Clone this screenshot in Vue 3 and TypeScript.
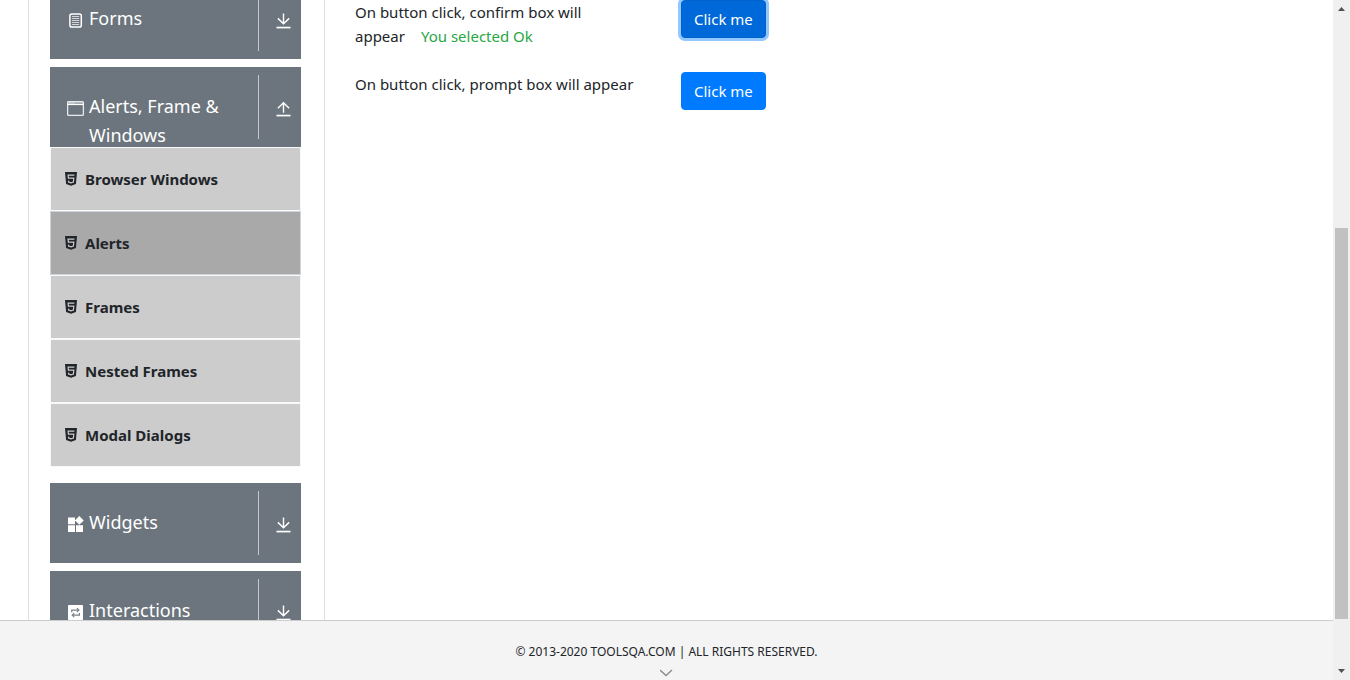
<script setup lang="ts">
import { ref } from 'vue'

type IconName = 'forms' | 'window' | 'widgets' | 'interactions'

interface Group {
  name: string
  icon: IconName
  open: boolean
  items: string[]
}

const groups = ref<Group[]>([
  { name: 'Forms', icon: 'forms', open: false, items: [] },
  {
    name: 'Alerts, Frame & Windows',
    icon: 'window',
    open: true,
    items: ['Browser Windows', 'Alerts', 'Frames', 'Nested Frames', 'Modal Dialogs'],
  },
  { name: 'Widgets', icon: 'widgets', open: false, items: [] },
  { name: 'Interactions', icon: 'interactions', open: false, items: [] },
])

const activeItem = ref('Alerts')
const focused = ref('confirm')
</script>

<template>
  <div class="app">
    <div class="page">
      <div class="viewport">
        <nav class="sidebar">
          <div class="groups">
            <section v-for="group in groups" :key="group.name" class="group">
              <button type="button" class="group-header" :aria-expanded="group.open">
                <svg v-if="group.icon === 'forms'" class="group-icon" viewBox="0 0 18 18" aria-hidden="true">
                  <rect x="2.9" y="1.9" width="11.4" height="13.2" rx="1.8" fill="none" stroke="currentColor" stroke-width="1.5" />
                  <path d="M5 4.5h7.2M5 6.5h7.2M5 8.5h7.2M5 10.5h7.2M5 12.5h7.2" stroke="currentColor" stroke-width="1" opacity="0.7" />
                </svg>
                <svg v-else-if="group.icon === 'window'" class="group-icon" viewBox="0 0 18 18" aria-hidden="true">
                  <rect x="0.6" y="1.6" width="15.8" height="13.8" rx="1" fill="none" stroke="currentColor" stroke-width="1.3" opacity="0.85" />
                  <path d="M0.6 4.5h15.8" stroke="currentColor" stroke-width="1.2" />
                  <path d="M1 3h15" stroke="currentColor" stroke-width="1.6" opacity="0.45" />
                  <path d="M2.5 3h1M4.5 3h1M6.5 3h1" stroke="currentColor" stroke-width="1.2" />
                </svg>
                <svg v-else-if="group.icon === 'widgets'" class="group-icon" viewBox="0 0 18 18" aria-hidden="true">
                  <path d="M1 1.5h7v6.8H1zM1 9.3h7V16H1zM9 9.3h7V16H9zM12.3 0l4.5 4.4-4.5 4.3-4.4-4.3z" fill="currentColor" />
                </svg>
                <svg v-else class="group-icon" viewBox="0 0 18 18" aria-hidden="true">
                  <rect x="1" y="1" width="15" height="15" rx="0.8" fill="currentColor" />
                  <g fill="none" stroke="#6c757d" stroke-width="1.2" opacity="0.9">
                    <path d="M4.7 8.3V6.1h6.4M12.4 8.9v2.2H6" />
                    <path d="M9.9 4.2l2 1.9-2 1.9M7.2 9.2l-2 1.9 2 1.9" />
                  </g>
                </svg>
                <span class="group-name">{{ group.name }}</span>
                <span class="group-toggle">
                  <svg viewBox="0 0 16 16" aria-hidden="true">
                    <g fill="none" stroke="currentColor" stroke-width="1.5">
                      <path v-if="group.open" d="M8 12V1.4M2 7.2l6-5.8 6 5.8" />
                      <path v-else d="M8 0v10.8M2 5.2l6 5.8 6-5.8" />
                      <path d="M0.5 15h15" stroke-width="1.8" />
                    </g>
                  </svg>
                </span>
              </button>
              <ul v-if="group.open" class="menu">
                <li v-for="item in group.items" :key="item">
                  <a href="#" class="menu-item" :class="{ active: item === activeItem }" @click.prevent="activeItem = item">
                    <svg viewBox="0 0 12 14" aria-hidden="true">
                      <path d="M0 0h12l-1.1 12L6 13.7 1.1 12z" fill="currentColor" />
                      <path d="M9.4 3.1H3.1l.3 3.1h5.4l-.4 3.9L6 10.9l-2.4-.8-.1-1.5" fill="none" stroke="#cccccc" stroke-width="1.2" />
                    </svg>
                    <span>{{ item }}</span>
                  </a>
                </li>
              </ul>
            </section>
          </div>
        </nav>
        <main class="content">
          <div class="row">
            <p class="label">
              On button click, confirm box will
              <span class="result-line">appear<span class="result">You selected Ok</span></span>
            </p>
            <button type="button" class="btn" :class="{ focused: focused === 'confirm' }" @click="focused = 'confirm'">Click me</button>
          </div>
          <div class="row">
            <p class="label">On button click, prompt box will appear</p>
            <button type="button" class="btn" :class="{ focused: focused === 'prompt' }" @click="focused = 'prompt'">Click me</button>
          </div>
        </main>
      </div>
      <footer class="footer">
        <span>© 2013-2020 TOOLSQA.COM | ALL RIGHTS RESERVED.</span>
        <svg viewBox="0 0 14 8" aria-hidden="true">
          <path d="M0 1l6 5.5L12 1" fill="none" stroke="#8a8a8a" stroke-width="1.3" />
        </svg>
      </footer>
    </div>
    <div class="scrollbar" aria-hidden="true">
      <svg viewBox="0 0 7 4"><path d="M0 4L3.5 0 7 4z" fill="#505050" /></svg>
      <div class="track"><div class="thumb"></div></div>
      <svg viewBox="0 0 7 4"><path d="M0 0L3.5 4 7 0z" fill="#505050" /></svg>
    </div>
  </div>
</template>

<style>
body {
  margin: 0;
}
</style>

<style scoped>
.app {
  display: flex;
  height: 100vh;
  overflow: hidden;
  background: #fff;
  color: #212529;
  font: 15px/24px "Segoe UI", "Noto Sans", "Open Sans", sans-serif;
}
.page {
  flex: 1;
  min-width: 0;
  display: flex;
  flex-direction: column;
}
.viewport {
  flex: 1;
  min-height: 0;
  display: flex;
  overflow: hidden;
  padding-left: 28px;
}
.sidebar {
  box-sizing: border-box;
  flex: 0 0 297px;
  padding: 0 23px 0 21px;
  border: solid #dee2e6;
  border-width: 0 1px;
}
.groups {
  display: flex;
  flex-direction: column;
  gap: 8px;
  margin-top: -21px;
}
.group-header {
  box-sizing: border-box;
  display: flex;
  width: 100%;
  height: 80px;
  padding: 8px 0 8px 17px;
  border: 0;
  background: #6c757d;
  color: #fff;
  font: inherit;
  font-size: 18px;
  line-height: 29px;
  text-align: left;
  cursor: pointer;
}
.group-icon {
  flex: none;
  width: 18px;
  height: 18px;
  margin: 25px 4px 0 0;
}
.group-name {
  flex: 1;
  padding-top: 17px;
}
.group-toggle {
  box-sizing: border-box;
  flex: 0 0 43px;
  height: 64px;
  padding: 26px 0 0 17px;
  border-left: 1px solid #c4c8cb;
}
.group-toggle svg {
  display: block;
  width: 15px;
  height: 16px;
}
.menu {
  margin: 0 0 8px;
  padding: 0;
  list-style: none;
}
.menu-item {
  box-sizing: border-box;
  display: flex;
  align-items: center;
  gap: 8px;
  height: 64px;
  padding: 0 14px;
  border: 1px solid #f8f9fa;
  background: #ccc;
  color: #212529;
  font-weight: 700;
  text-decoration: none;
}
.menu-item.active {
  background: #a9a9a9;
  border-color: #ced4da;
}
.menu-item svg {
  width: 12px;
  height: 14px;
}
.content {
  flex: 1;
  padding: 0 30px;
}
.row {
  display: flex;
  align-items: flex-start;
  gap: 30px;
  margin-bottom: 24px;
}
.label {
  width: 296px;
  margin: 0;
}
.result-line {
  white-space: nowrap;
}
.result {
  margin-left: 16px;
  color: #28a745;
}
.btn {
  height: 38px;
  margin-bottom: -14px;
  padding: 0 12px;
  border: 1px solid #007bff;
  border-radius: 4px;
  background: #007bff;
  color: #fff;
  font: inherit;
  cursor: pointer;
}
.btn.focused {
  background: #0069d9;
  border-color: #0062cc;
  box-shadow: 0 0 0 3px rgba(38, 143, 255, 0.5);
  outline: 0;
}
.footer {
  box-sizing: border-box;
  flex: 0 0 60px;
  display: flex;
  flex-direction: column;
  align-items: center;
  gap: 8px;
  padding-top: 22px;
  border-top: 1px solid #ccc;
  background: #f4f4f4;
  font-size: 12px;
  line-height: 18px;
}
.footer svg {
  width: 14px;
  height: 8px;
}
.scrollbar {
  box-sizing: border-box;
  flex: 0 0 17px;
  display: flex;
  flex-direction: column;
  align-items: center;
  gap: 7px;
  padding: 7px 0;
  background: #f0f0f0;
}
.scrollbar > svg {
  flex: none;
  width: 7px;
  height: 4px;
}
.track {
  flex: 1;
  display: flex;
  flex-direction: column;
  justify-content: flex-end;
  width: 13px;
  padding-bottom: 43px;
}
.thumb {
  height: 65%;
  background: #c1c1c1;
}
</style>
